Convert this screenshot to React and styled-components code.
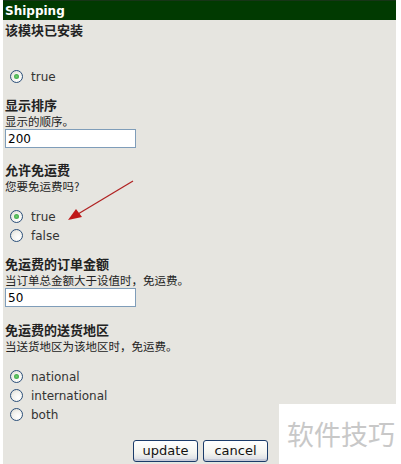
import React from 'react';
import styled, { createGlobalStyle } from 'styled-components';

const GlobalStyle = createGlobalStyle`
  html, body {
    margin: 0;
    padding: 0;
    background: #fff;
  }
  body {
    font-family: "DejaVu Sans", "Noto Sans CJK SC", sans-serif;
    font-size: 12px;
    color: #222;
  }
`;

const Page = styled.div`
  position: relative;
  width: 401px;
  height: 464px;
  overflow: hidden;
`;

const Panel = styled.div`
  margin-left: 3px;
  width: 393px;
  height: 464px;
  background: #e6e5e0;
  display: flex;
  flex-direction: column;
`;

const Header = styled.div`
  height: 19px;
  line-height: 20px;
  background: #013a01;
  border-top: 1px solid #173417;
  color: #fff;
  font-weight: bold;
  font-size: 12px;
  padding-left: 2px;
`;

const Body = styled.div`
  padding: 2px 0 0 2px;
  display: flex;
  flex-direction: column;
`;

const Section = styled.div`
  display: flex;
  flex-direction: column;
  margin-bottom: ${p => p.$gap ?? 11}px;
`;

const Title = styled.div`
  font-family: "Noto Sans CJK SC", sans-serif;
  font-weight: bold;
  font-size: 13px;
  line-height: 16px;
  height: 16px;
  color: #222;
`;

const Desc = styled.div`
  font-family: "Noto Sans CJK SC", sans-serif;
  font-size: 11.5px;
  line-height: 16px;
  height: 16px;
  color: #222;
`;

const TextInput = styled.input`
  box-sizing: border-box;
  width: 131px;
  height: 19px;
  margin: 0;
  padding: 1px 2px;
  border: 1px solid #7f9db9;
  background: #fff;
  font-family: "DejaVu Sans", sans-serif;
  font-size: 12px;
  color: #000;
  outline: none;
`;

const RadioGroup = styled.div`
  display: flex;
  flex-direction: column;
  margin-top: 13px;
`;

const RadioRow = styled.label`
  display: flex;
  align-items: center;
  height: 19px;
  padding-left: 5px;
  font-size: 12px;
  color: #333;
`;

const Circle = styled.span`
  box-sizing: border-box;
  width: 13px;
  height: 13px;
  border-radius: 50%;
  border: 1px solid #2a4f7a;
  background: radial-gradient(circle at 65% 70%, #fff 0%, #f2f2ee 50%, #d6d4cc 100%);
  display: flex;
  align-items: center;
  justify-content: center;
  margin-right: 8px;
  &::after {
    content: '';
    width: 5px;
    height: 5px;
    border-radius: 50%;
    background: ${p => (p.$checked ? 'radial-gradient(circle, #6fd06f 0%, #2f9a3a 100%)' : 'transparent')};
  }
`;

const Buttons = styled.div`
  display: flex;
  gap: 5px;
  margin-top: 16px;
  padding-left: 128px;
`;

const Button = styled.button`
  box-sizing: border-box;
  width: 65px;
  height: 22px;
  border: 1px solid #1b3b6a;
  border-radius: 3px;
  background: linear-gradient(#ffffff 0%, #f4f4f0 60%, #d8dbe4 100%);
  font-family: "DejaVu Sans", sans-serif;
  font-size: 13px;
  line-height: 18px;
  color: #111;
  padding: 0;
  box-shadow: inset 0 -2px 0 #c6cad8;
`;

const Watermark = styled.div`
  position: absolute;
  right: 0;
  bottom: 0;
  width: 120px;
  height: 60px;
  background: #fff;
  color: #c8c8c8;
  font-family: "Noto Sans CJK SC", sans-serif;
  font-size: 27px;
  line-height: 60px;
  text-align: center;
  padding-left: 2px;
`;

const Arrow = styled.svg`
  position: absolute;
  left: 60px;
  top: 176px;
`;

function Radio({ label, checked }) {
  return (
    <RadioRow>
      <Circle $checked={checked} />
      {label}
    </RadioRow>
  );
}

export default function App() {
  return (
    <>
      <GlobalStyle />
      <Page>
        <Panel>
          <Header>Shipping</Header>
          <Body>
            <Section>
              <Title>该模块已安装</Title>
              <Desc />
              <RadioGroup>
                <Radio label="true" checked />
              </RadioGroup>
            </Section>
            <Section $gap={14}>
              <Title>显示排序</Title>
              <Desc>显示的顺序。</Desc>
              <TextInput defaultValue="200" />
            </Section>
            <Section>
              <Title>允许免运费</Title>
              <Desc>您要免运费吗?</Desc>
              <RadioGroup>
                <Radio label="true" checked />
                <Radio label="false" />
              </RadioGroup>
            </Section>
            <Section $gap={15}>
              <Title>免运费的订单金额</Title>
              <Desc>当订单总金额大于设值时，免运费。</Desc>
              <TextInput defaultValue="50" />
            </Section>
            <Section $gap={0}>
              <Title>免运费的送货地区</Title>
              <Desc>当送货地区为该地区时，免运费。</Desc>
              <RadioGroup>
                <Radio label="national" checked />
                <Radio label="international" />
                <Radio label="both" />
              </RadioGroup>
            </Section>
            <Buttons>
              <Button>update</Button>
              <Button>cancel</Button>
            </Buttons>
          </Body>
        </Panel>
        <Arrow width="80" height="52" viewBox="0 0 80 52">
          <line x1="73" y1="5" x2="18" y2="38" stroke="#b02020" strokeWidth="1.2" />
          <polygon points="8,44 16,33 22,41" fill="#c01818" />
        </Arrow>
        <Watermark>软件技巧</Watermark>
      </Page>
    </>
  );
}
